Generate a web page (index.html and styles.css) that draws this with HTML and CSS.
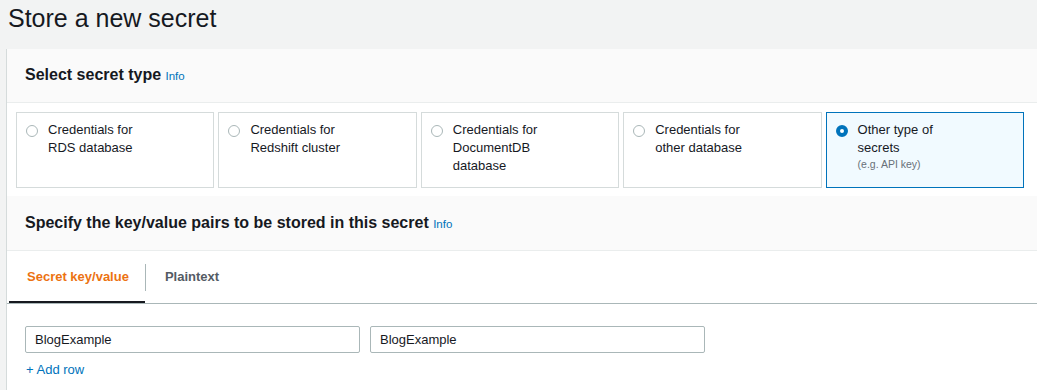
FILE: index.html
```html
<!DOCTYPE html>
<html lang="en">

<head>
  <meta charset="UTF-8">
  <meta name="viewport" content="width=device-width, initial-scale=1.0">
  <title>Store a new secret</title>
  <link rel="stylesheet" href="styles.css">
</head>

<body>
  <div id="page">
    <h1 id="title">Store a new secret</h1>
    <div class="container">
      <div class="container-header">
        <h2 class="header-text">Select secret type <a class="info-link" href="#">Info</a></h2>
      </div>
      <div class="tiles">
        <label class="tile">
          <span class="radio"></span>
          <span class="tile-text">Credentials for<br>RDS database</span>
        </label>
        <label class="tile">
          <span class="radio"></span>
          <span class="tile-text">Credentials for<br>Redshift cluster</span>
        </label>
        <label class="tile">
          <span class="radio"></span>
          <span class="tile-text">Credentials for<br>DocumentDB<br>database</span>
        </label>
        <label class="tile">
          <span class="radio"></span>
          <span class="tile-text">Credentials for<br>other database</span>
        </label>
        <label class="tile selected">
          <span class="radio checked"></span>
          <span class="tile-text">
            Other type of<br>secrets
            <span class="tile-description">(e.g. API key)</span>
          </span>
        </label>
      </div>

      <div class="container-header second">
        <h2 class="header-text">Specify the key/value pairs to be stored in this secret <a class="info-link" href="#">Info</a></h2>
      </div>
      <div class="tabs">
        <div class="tab active">Secret key/value</div>
        <span class="tab-divider"></span>
        <div class="tab">Plaintext</div>
      </div>
      <div class="key-values">
        <div class="kv-row">
          <input class="text-input" type="text" value="BlogExample">
          <input class="text-input" type="text" value="BlogExample">
        </div>
        <a class="add-row" href="#">+ Add row</a>
      </div>
    </div>
  </div>
</body>

</html>
```

FILE: styles.css
```css
body {
  margin: 0;
  background-color: #f2f3f3;
  font-family: "Liberation Sans", Arial, sans-serif;
  color: #16191f;
  overflow: hidden;
}

#page {
  padding-left: 6px;
}

#title {
  margin: 3px 0 16px 2px;
  font-size: 25px;
  line-height: 30px;
  font-weight: normal;
}

.container {
  width: 1040px;
  height: 341px;
  background-color: white;
  border-left: 1px solid #d5dbdb;
}

.container-header {
  background-color: #fafafa;
  border-bottom: 1px solid #eaeded;
  padding: 16px 18px;
}

.container-header.second {
  padding-top: 17px;
}

.header-text {
  margin: 0;
  font-size: 16px;
  line-height: 20px;
  font-weight: bold;
}

.info-link {
  font-size: 11.5px;
  font-weight: normal;
  color: #0073bb;
  text-decoration: none;
}

.tiles {
  display: grid;
  grid-template-columns: repeat(5, 1fr);
  gap: 4px;
  padding: 9px 23px 8px 9px;
}

.tile {
  display: flex;
  align-items: flex-start;
  gap: 10px;
  height: 58px;
  padding: 8px 9px;
  border: 1px solid #d5dbdb;
  font-size: 13px;
  line-height: 18px;
}

.tile.selected {
  border-color: #0073bb;
  background-color: #f1faff;
}

.radio {
  flex: none;
  box-sizing: border-box;
  width: 12px;
  height: 12px;
  margin-top: 4px;
  border: 1px solid #aab7b8;
  border-radius: 50%;
  background-color: white;
}

.radio.checked {
  border: 4px solid #0073bb;
}

.tile-description {
  display: block;
  font-size: 10.5px;
  line-height: 14px;
  color: #687078;
}

.tabs {
  display: flex;
  align-items: center;
  border-bottom: 1px solid #aab7b8;
  padding-left: 2px;
}

.tab {
  padding: 18px 16px 18px 19px;
  font-size: 13px;
  line-height: 16px;
  font-weight: bold;
  color: #545b64;
}

.tab.active {
  padding-left: 18px;
  color: #ec7211;
  box-shadow: inset 0 -2px 0 #16191f;
}

.tab-divider {
  width: 1px;
  height: 27px;
  background-color: #aab7b8;
}

.key-values {
  padding: 22px 18px;
}

.kv-row {
  display: flex;
  gap: 10px;
}

.text-input {
  box-sizing: border-box;
  width: 335px;
  height: 27px;
  margin: 0;
  padding: 0 9px;
  border: 1px solid #aab7b8;
  border-radius: 2px;
  font-family: "Liberation Sans", Arial, sans-serif;
  font-size: 13px;
  color: #16191f;
}

.add-row {
  display: inline-block;
  margin-top: 9px;
  margin-left: 1px;
  font-size: 13px;
  line-height: 16px;
  color: #0073bb;
  text-decoration: none;
}
```
